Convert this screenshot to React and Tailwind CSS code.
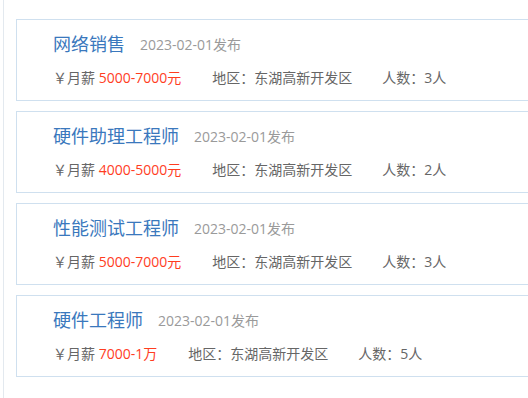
import React from "react";

const jobs = [
  { title: "网络销售", date: "2023-02-01发布", salary: "5000-7000元", area: "东湖高新开发区", count: "3人" },
  { title: "硬件助理工程师", date: "2023-02-01发布", salary: "4000-5000元", area: "东湖高新开发区", count: "2人" },
  { title: "性能测试工程师", date: "2023-02-01发布", salary: "5000-7000元", area: "东湖高新开发区", count: "3人" },
  { title: "硬件工程师", date: "2023-02-01发布", salary: "7000-1万", area: "东湖高新开发区", count: "5人" },
];

const JobCard = ({ job }) => (
  <div className="w-[600px] h-[82px] shrink-0 border border-[#cfe0ef] bg-white pl-[36px] pt-[11px]">
    <div className="flex items-center h-[26px]">
      <span className="text-[18px] text-[#3a78bd]">{job.title}</span>
      <span className="ml-[15px] text-[14px] text-[#9a9a9a]">{job.date}</span>
    </div>
    <div className="flex items-center h-[20px] mt-[10px] text-[14px] text-[#666]">
      <span>
        ￥月薪 <span className="text-[#ff3d1f]">{job.salary}</span>
      </span>
      <span className="ml-[31px]">地区：{job.area}</span>
      <span className="ml-[30px]">人数：{job.count}</span>
    </div>
  </div>
);

export default function App() {
  return (
    <div
      className="w-[528px] h-[398px] overflow-hidden bg-white flex"
      style={{ fontFamily: '"Open Sans", "Noto Sans CJK SC", sans-serif' }}
    >
      <div className="w-[3px] shrink-0" />
      <div className="w-px shrink-0 h-full bg-[#e3e9ef]" />
      <div className="min-w-0 flex-1 pl-[12px] pt-[19px] flex flex-col gap-[10px]">
        {jobs.map((job, i) => (
          <JobCard key={i} job={job} />
        ))}
      </div>
    </div>
  );
}
